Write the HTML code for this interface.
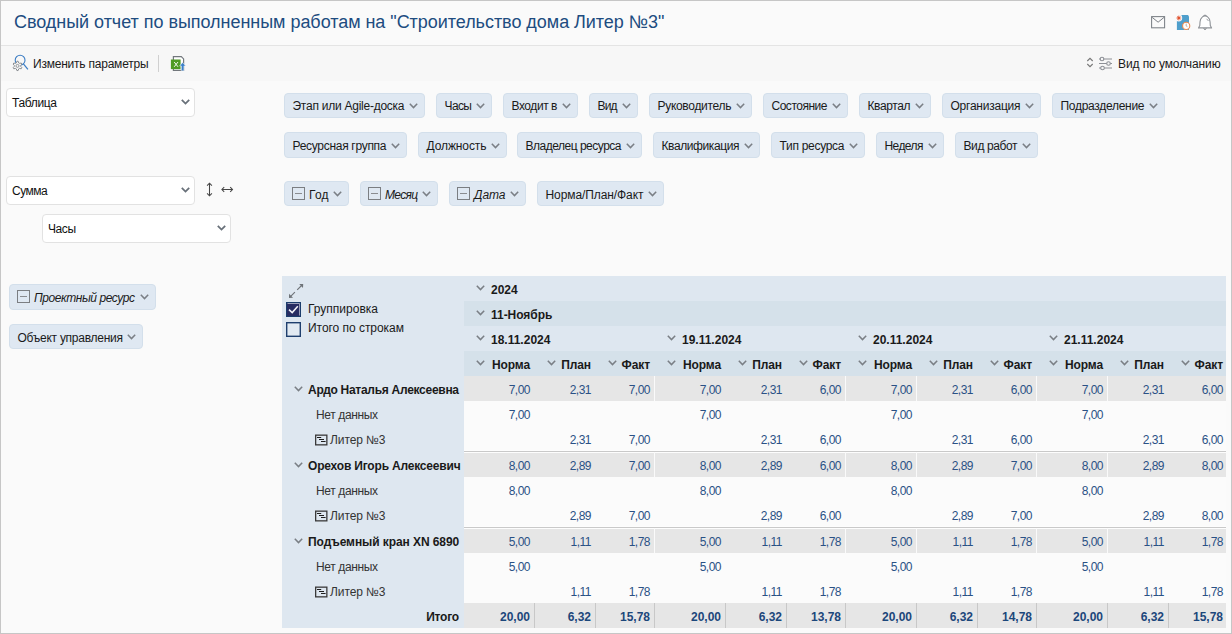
<!DOCTYPE html>
<html><head><meta charset="utf-8"><style>
*{box-sizing:border-box;margin:0;padding:0}
html,body{width:1232px;height:634px;overflow:hidden}
body{background:#fafafa;font-family:"Liberation Sans", sans-serif;font-size:12px;color:#222;position:relative}
.a{position:absolute;white-space:nowrap}
.frame{position:absolute;left:0;top:0;width:1232px;height:634px;border:1px solid #c6c6c6;pointer-events:none;z-index:50}
.chev{position:absolute}
.sel{position:absolute;background:#fff;border:1px solid #e2e2e2;border-radius:4px}
.sel span{position:absolute;left:5px;top:7px;font-size:12px;color:#111;letter-spacing:-0.1px}
.chip{position:absolute;background:#dfe8f2;border:1px solid #d3dfeb;border-radius:4px;height:25px}
.chip span{position:absolute;top:5px;font-size:12px;color:#1a1a1a}
.chip svg.chev{top:9px}
.mini{position:absolute;width:13px;height:13px;border:1px solid #7b7e82;top:5px}
.mini:after{content:"";position:absolute;left:2px;right:2px;top:5px;height:1px;background:#8a8c90}
.tb{position:absolute}
.num{position:absolute;text-align:right;font-size:12px;color:#2a5185;letter-spacing:-0.5px}
.hdr{position:absolute;font-weight:bold;font-size:12px;color:#1a1a1a;letter-spacing:-0.2px}
</style></head>
<body>
<div class="frame"></div><div class="a" style="left:1px;top:45px;width:1230px;height:1px;background:#e4e4e4"></div><div class="a" style="left:1px;top:46px;width:1230px;height:35px;background:#f7f7f7"></div><div class="a" style="left:14px;top:12px;font-size:18px;color:#204c80;letter-spacing:-0.04px">Сводный отчет по выполненным работам на "Строительство дома Литер №3"</div><svg class="a" style="left:1148px;top:13px" width="20" height="18" viewBox="0 0 20 18"><rect x="3.6" y="3.6" width="13" height="11.2" fill="none" stroke="#7b8086" stroke-width="1.05"/><path d="M4.2 4.4 L10.1 9.2 L16 4.4" fill="none" stroke="#7b8086" stroke-width="1"/></svg><svg class="a" style="left:1172px;top:10px" width="24" height="24" viewBox="0 0 24 24"><path d="M4.9 9 V19.9 H17 V6.5 L16 5.1 H9.5 Z" fill="#4f9fcc"/><circle cx="6.8" cy="8" r="3.4" fill="#fafafa"/><path d="M6.8 5.6 V10.4 M4.4 8 H9.2 M5.1 6.3 L8.5 9.7 M8.5 6.3 L5.1 9.7" stroke="#e8765a" stroke-width="1"/><circle cx="6.8" cy="8" r="1.2" fill="#e0502d"/><circle cx="14.2" cy="15.9" r="3.6" fill="#fff" stroke="#eb8a4e" stroke-width="1.1"/><path d="M14.2 13.6 V16 L15.4 16.6" fill="none" stroke="#a9a9a9" stroke-width="0.9"/></svg><svg class="a" style="left:1194px;top:10px" width="24" height="24" viewBox="0 0 24 24"><path d="M11 5.9 C9.6 5.9 9 6.4 8.2 7.1 C6.6 8.4 6.1 10 6 12 L5.8 15.6 L4.5 17.9 H17.6 L16.3 15.6 L16.1 12 C16 10 15.5 8.4 13.9 7.1 C13.1 6.4 12.4 5.9 11 5.9 Z" fill="#fff" stroke="#8f9398" stroke-width="1.1" stroke-linejoin="round"/><path d="M9.4 18.4 Q11 21.2 12.6 18.4" fill="#8f9398" stroke="#8f9398" stroke-width="0.8"/><path d="M9.6 5.8 Q11 4.2 12.4 5.8" fill="#8f9398" stroke="#8f9398" stroke-width="1"/><path d="M12.6 8.8 L14.5 11" stroke="#8f9398" stroke-width="0.9"/></svg><svg class="a" style="left:8px;top:50px" width="24" height="24" viewBox="0 0 24 24"><circle cx="12.1" cy="10.2" r="4.9" fill="none" stroke="#3c7dc4" stroke-width="1.1"/><path d="M15.4 13.8 L19.9 19.4" stroke="#3c7dc4" stroke-width="1.2"/><path d="M8.89 11.24 L10.11 11.24 L10.72 12.94 L11.45 13.36 L13.23 13.04 L13.84 14.10 L12.67 15.48 L12.67 16.32 L13.84 17.70 L13.23 18.76 L11.45 18.44 L10.72 18.86 L10.11 20.56 L8.89 20.56 L8.28 18.86 L7.55 18.44 L5.77 18.76 L5.16 17.70 L6.33 16.32 L6.33 15.48 L5.16 14.10 L5.77 13.04 L7.55 13.36 L8.28 12.94 Z" fill="#f7f7f7" stroke="#8a8d91" stroke-width="1" stroke-linejoin="round"/><circle cx="9.5" cy="15.9" r="1.5" fill="none" stroke="#8a8d91" stroke-width="0.9"/></svg><div class="a" style="left:33px;top:57px;font-size:12px;color:#1a1a1a;letter-spacing:-0.22px">Изменить параметры</div><div class="a" style="left:158px;top:55px;width:1px;height:17px;background:#d0d0d0"></div><svg class="a" style="left:166px;top:50px" width="24" height="24" viewBox="0 0 24 24"><path d="M7.4 20.3 V6.6 H15.3 L17.6 8.9 V20.3 Z" fill="#fff" stroke="#72777c" stroke-width="1.2"/><rect x="4.9" y="9.5" width="9.7" height="9.6" fill="#4f9a24"/><path d="M8.2 12 L12 16.8 M12 12 L8.2 16.8" stroke="#f4f8f0" stroke-width="1"/><path d="M13.6 15.9 L16.6 12.6 L19.8 15.9 H17.9 V20.8 H15.3 V15.9 Z" fill="#3b80c9" stroke="#fff" stroke-width="0.5"/></svg><svg class="a" style="left:1086px;top:57px" width="8" height="11" viewBox="0 0 8 11"><path d="M1.3 4 L4 1.3 L6.7 4 M1.3 7 L4 9.7 L6.7 7" fill="none" stroke="#777" stroke-width="1.1"/></svg><svg class="a" style="left:1098px;top:56px" width="15" height="15" viewBox="0 0 15 15"><path d="M1 3 H14 M1 7.5 H14 M1 12 H14" stroke="#8d9096" stroke-width="1.1"/><circle cx="4" cy="3" r="1.8" fill="#f6f6f6" stroke="#8d9096" stroke-width="1.1"/><circle cx="10.5" cy="7.5" r="1.8" fill="#f6f6f6" stroke="#8d9096" stroke-width="1.1"/><circle cx="4.5" cy="12" r="1.8" fill="#f6f6f6" stroke="#8d9096" stroke-width="1.1"/></svg><div class="a" style="left:1118px;top:57px;font-size:12px;color:#1a1a1a;letter-spacing:-0.09px">Вид по умолчанию</div><div class="sel" style="left:6px;top:88px;width:189px;height:29px"><span style="letter-spacing:-0.34px">Таблица</span><svg class="chev" style="left:174px;top:10px" width="9" height="7" viewBox="0 0 9 7"><path d="M0.8 0.8 L4.5 4.6 L8.2 0.8" fill="none" stroke="#687079" stroke-width="1.75"/></svg></div><div class="sel" style="left:6px;top:176px;width:189px;height:29px"><span style="letter-spacing:-0.5px">Сумма</span><svg class="chev" style="left:174px;top:10px" width="9" height="7" viewBox="0 0 9 7"><path d="M0.8 0.8 L4.5 4.6 L8.2 0.8" fill="none" stroke="#687079" stroke-width="1.75"/></svg></div><div class="sel" style="left:42px;top:214px;width:189px;height:29px"><span style="letter-spacing:-0.43px">Часы</span><svg class="chev" style="left:174px;top:10px" width="9" height="7" viewBox="0 0 9 7"><path d="M0.8 0.8 L4.5 4.6 L8.2 0.8" fill="none" stroke="#687079" stroke-width="1.75"/></svg></div><svg class="a" style="left:205px;top:182px" width="8" height="15" viewBox="0 0 8 15"><path d="M4.5 1.2 V13.8 M2.1 3.6 L4.5 1.2 L6.9 3.6 M2.1 11.4 L4.5 13.8 L6.9 11.4" fill="none" stroke="#454545" stroke-width="1.05"/></svg><svg class="a" style="left:221px;top:185px" width="13" height="9" viewBox="0 0 13 9"><path d="M0.9 4.5 H11.5 M3.2 2.2 L0.9 4.5 L3.2 6.8 M9.2 2.2 L11.5 4.5 L9.2 6.8" fill="none" stroke="#454545" stroke-width="1.05"/></svg><div class="chip" style="left:284px;top:93px;width:141px;height:25px"><span style="left:7.5px;top:5px;letter-spacing:-0.252px">Этап или Agile-доска</span><svg class="chev" style="left:123.5px;top:9px" width="9" height="7" viewBox="0 0 9 7"><path d="M0.8 0.8 L4.5 4.6 L8.2 0.8" fill="none" stroke="#7a7f85" stroke-width="1.5"/></svg></div><div class="chip" style="left:436px;top:93px;width:56px;height:25px"><span style="left:7.5px;top:5px;letter-spacing:-0.599px">Часы</span><svg class="chev" style="left:38.5px;top:9px" width="9" height="7" viewBox="0 0 9 7"><path d="M0.8 0.8 L4.5 4.6 L8.2 0.8" fill="none" stroke="#7a7f85" stroke-width="1.5"/></svg></div><div class="chip" style="left:503px;top:93px;width:75px;height:25px"><span style="left:7.5px;top:5px;letter-spacing:-0.438px">Входит в</span><svg class="chev" style="left:57.5px;top:9px" width="9" height="7" viewBox="0 0 9 7"><path d="M0.8 0.8 L4.5 4.6 L8.2 0.8" fill="none" stroke="#7a7f85" stroke-width="1.5"/></svg></div><div class="chip" style="left:589px;top:93px;width:49px;height:25px"><span style="left:7.5px;top:5px;letter-spacing:-0.8px">Вид</span><svg class="chev" style="left:31.5px;top:9px" width="9" height="7" viewBox="0 0 9 7"><path d="M0.8 0.8 L4.5 4.6 L8.2 0.8" fill="none" stroke="#7a7f85" stroke-width="1.5"/></svg></div><div class="chip" style="left:649px;top:93px;width:103px;height:25px"><span style="left:7.5px;top:5px;letter-spacing:-0.301px">Руководитель</span><svg class="chev" style="left:85.5px;top:9px" width="9" height="7" viewBox="0 0 9 7"><path d="M0.8 0.8 L4.5 4.6 L8.2 0.8" fill="none" stroke="#7a7f85" stroke-width="1.5"/></svg></div><div class="chip" style="left:763px;top:93px;width:85px;height:25px"><span style="left:7.5px;top:5px;letter-spacing:-0.486px">Состояние</span><svg class="chev" style="left:67.5px;top:9px" width="9" height="7" viewBox="0 0 9 7"><path d="M0.8 0.8 L4.5 4.6 L8.2 0.8" fill="none" stroke="#7a7f85" stroke-width="1.5"/></svg></div><div class="chip" style="left:859px;top:93px;width:72px;height:25px"><span style="left:7.5px;top:5px;letter-spacing:-0.393px">Квартал</span><svg class="chev" style="left:54.5px;top:9px" width="9" height="7" viewBox="0 0 9 7"><path d="M0.8 0.8 L4.5 4.6 L8.2 0.8" fill="none" stroke="#7a7f85" stroke-width="1.5"/></svg></div><div class="chip" style="left:942px;top:93px;width:99px;height:25px"><span style="left:7.5px;top:5px;letter-spacing:-0.237px">Организация</span><svg class="chev" style="left:81.5px;top:9px" width="9" height="7" viewBox="0 0 9 7"><path d="M0.8 0.8 L4.5 4.6 L8.2 0.8" fill="none" stroke="#7a7f85" stroke-width="1.5"/></svg></div><div class="chip" style="left:1052px;top:93px;width:113px;height:25px"><span style="left:7.5px;top:5px;letter-spacing:-0.288px">Подразделение</span><svg class="chev" style="left:95.5px;top:9px" width="9" height="7" viewBox="0 0 9 7"><path d="M0.8 0.8 L4.5 4.6 L8.2 0.8" fill="none" stroke="#7a7f85" stroke-width="1.5"/></svg></div><div class="chip" style="left:284px;top:132px;width:123px;height:26px"><span style="left:7.5px;top:6px;letter-spacing:-0.295px">Ресурсная группа</span><svg class="chev" style="left:105.5px;top:10px" width="9" height="7" viewBox="0 0 9 7"><path d="M0.8 0.8 L4.5 4.6 L8.2 0.8" fill="none" stroke="#7a7f85" stroke-width="1.5"/></svg></div><div class="chip" style="left:418px;top:132px;width:89px;height:26px"><span style="left:7.5px;top:6px;letter-spacing:-0.094px">Должность</span><svg class="chev" style="left:71.5px;top:10px" width="9" height="7" viewBox="0 0 9 7"><path d="M0.8 0.8 L4.5 4.6 L8.2 0.8" fill="none" stroke="#7a7f85" stroke-width="1.5"/></svg></div><div class="chip" style="left:517px;top:132px;width:125px;height:26px"><span style="left:7.5px;top:6px;letter-spacing:-0.494px">Владелец ресурса</span><svg class="chev" style="left:107.5px;top:10px" width="9" height="7" viewBox="0 0 9 7"><path d="M0.8 0.8 L4.5 4.6 L8.2 0.8" fill="none" stroke="#7a7f85" stroke-width="1.5"/></svg></div><div class="chip" style="left:653px;top:132px;width:107px;height:26px"><span style="left:7.5px;top:6px;letter-spacing:-0.405px">Квалификация</span><svg class="chev" style="left:89.5px;top:10px" width="9" height="7" viewBox="0 0 9 7"><path d="M0.8 0.8 L4.5 4.6 L8.2 0.8" fill="none" stroke="#7a7f85" stroke-width="1.5"/></svg></div><div class="chip" style="left:771px;top:132px;width:94px;height:26px"><span style="left:7.5px;top:6px;letter-spacing:-0.291px">Тип ресурса</span><svg class="chev" style="left:76.5px;top:10px" width="9" height="7" viewBox="0 0 9 7"><path d="M0.8 0.8 L4.5 4.6 L8.2 0.8" fill="none" stroke="#7a7f85" stroke-width="1.5"/></svg></div><div class="chip" style="left:876px;top:132px;width:68px;height:26px"><span style="left:7.5px;top:6px;letter-spacing:-0.572px">Неделя</span><svg class="chev" style="left:50.5px;top:10px" width="9" height="7" viewBox="0 0 9 7"><path d="M0.8 0.8 L4.5 4.6 L8.2 0.8" fill="none" stroke="#7a7f85" stroke-width="1.5"/></svg></div><div class="chip" style="left:955px;top:132px;width:83px;height:26px"><span style="left:7.5px;top:6px;letter-spacing:-0.396px">Вид работ</span><svg class="chev" style="left:65.5px;top:10px" width="9" height="7" viewBox="0 0 9 7"><path d="M0.8 0.8 L4.5 4.6 L8.2 0.8" fill="none" stroke="#7a7f85" stroke-width="1.5"/></svg></div><div class="chip" style="left:284px;top:181px;width:65px;height:25px"><div class="mini" style="left:7px"></div><span style="left:24px;top:6px;letter-spacing:0.195px">Год</span><svg class="chev" style="left:47.5px;top:9px" width="9" height="7" viewBox="0 0 9 7"><path d="M0.8 0.8 L4.5 4.6 L8.2 0.8" fill="none" stroke="#7a7f85" stroke-width="1.5"/></svg></div><div class="chip" style="left:360px;top:181px;width:78px;height:25px"><div class="mini" style="left:7px"></div><span style="left:24px;top:6px;font-style:italic;letter-spacing:-0.703px">Месяц</span><svg class="chev" style="left:60.5px;top:9px" width="9" height="7" viewBox="0 0 9 7"><path d="M0.8 0.8 L4.5 4.6 L8.2 0.8" fill="none" stroke="#7a7f85" stroke-width="1.5"/></svg></div><div class="chip" style="left:449px;top:181px;width:77px;height:25px"><div class="mini" style="left:7px"></div><span style="left:24px;top:6px;font-style:italic;letter-spacing:-0.057px">Дата</span><svg class="chev" style="left:59.5px;top:9px" width="9" height="7" viewBox="0 0 9 7"><path d="M0.8 0.8 L4.5 4.6 L8.2 0.8" fill="none" stroke="#7a7f85" stroke-width="1.5"/></svg></div><div class="chip" style="left:537px;top:181px;width:127px;height:25px"><span style="left:7.5px;top:6px;letter-spacing:-0.087px">Норма/План/Факт</span><svg class="chev" style="left:109.5px;top:9px" width="9" height="7" viewBox="0 0 9 7"><path d="M0.8 0.8 L4.5 4.6 L8.2 0.8" fill="none" stroke="#7a7f85" stroke-width="1.5"/></svg></div><div class="chip" style="left:9px;top:284px;width:147px;height:26px"><div class="mini" style="left:7px"></div><span style="left:24px;top:6px;font-style:italic;letter-spacing:-0.448px">Проектный ресурс</span><svg class="chev" style="left:129.5px;top:9px" width="9" height="7" viewBox="0 0 9 7"><path d="M0.8 0.8 L4.5 4.6 L8.2 0.8" fill="none" stroke="#7a7f85" stroke-width="1.5"/></svg></div><div class="chip" style="left:9px;top:324px;width:134px;height:25px"><span style="left:7.5px;top:6px;letter-spacing:-0.26px">Объект управления</span><svg class="chev" style="left:116.5px;top:9px" width="9" height="7" viewBox="0 0 9 7"><path d="M0.8 0.8 L4.5 4.6 L8.2 0.8" fill="none" stroke="#7a7f85" stroke-width="1.5"/></svg></div>
<div class="a" style="left:282px;top:276px;width:944px;height:352px;background:#dee7f0"></div><div class="a" style="left:464px;top:301px;width:762px;height:25px;background:#d5e1ea"></div><div class="a" style="left:464px;top:351px;width:762px;height:25px;background:#d5e1ea"></div><svg class="a" style="left:282px;top:278px" width="30" height="22" viewBox="0 0 30 22"><path d="M17.2 6 L21.2 5.9 L21 9.9 Z M7 15.8 L7 20 L11 19.8 Z" fill="#6f7479"/><path d="M15.2 11.9 L19.6 7.5 M8.2 18.8 L12.9 14.1" stroke="#6f7479" stroke-width="1.15"/></svg><svg class="a" style="left:286px;top:302px" width="15" height="15" viewBox="0 0 15 15"><rect x="0.5" y="0.5" width="14" height="14" fill="#272c62" stroke="#1b3d6c"/><path d="M1.5 1.5 H13.5 V13.5" fill="none" stroke="#e8ecf4" stroke-width="0.6"/><path d="M3 7.6 L6.2 10.6 L11.8 4.2" fill="none" stroke="#f4f4f8" stroke-width="1.5"/></svg><svg class="a" style="left:286px;top:322px" width="15" height="15" viewBox="0 0 15 15"><rect x="0.7" y="0.7" width="13.6" height="13.6" fill="#e2eaf2" stroke="#1f3f6e" stroke-width="1.4"/></svg><div class="a" style="left:308px;top:302px;font-size:12px;color:#1a1a1a;letter-spacing:0px">Группировка</div><div class="a" style="left:308px;top:321px;font-size:12px;color:#1a1a1a;letter-spacing:-0.04px">Итого по строкам</div><svg class="chev" style="left:476px;top:285px" width="9" height="7" viewBox="0 0 9 7"><path d="M0.8 0.8 L4.5 4.6 L8.2 0.8" fill="none" stroke="#7a7f85" stroke-width="1.5"/></svg><div class="hdr" style="left:491px;top:283px;letter-spacing:0">2024</div><svg class="chev" style="left:476px;top:310px" width="9" height="7" viewBox="0 0 9 7"><path d="M0.8 0.8 L4.5 4.6 L8.2 0.8" fill="none" stroke="#7a7f85" stroke-width="1.5"/></svg><div class="hdr" style="left:491px;top:308px;letter-spacing:-0.03px">11-Ноябрь</div><svg class="chev" style="left:476px;top:335px" width="9" height="7" viewBox="0 0 9 7"><path d="M0.8 0.8 L4.5 4.6 L8.2 0.8" fill="none" stroke="#7a7f85" stroke-width="1.5"/></svg><div class="hdr" style="left:491px;top:333px;letter-spacing:0">18.11.2024</div><svg class="chev" style="left:667px;top:335px" width="9" height="7" viewBox="0 0 9 7"><path d="M0.8 0.8 L4.5 4.6 L8.2 0.8" fill="none" stroke="#7a7f85" stroke-width="1.5"/></svg><div class="hdr" style="left:682px;top:333px;letter-spacing:0">19.11.2024</div><svg class="chev" style="left:858px;top:335px" width="9" height="7" viewBox="0 0 9 7"><path d="M0.8 0.8 L4.5 4.6 L8.2 0.8" fill="none" stroke="#7a7f85" stroke-width="1.5"/></svg><div class="hdr" style="left:873px;top:333px;letter-spacing:0">20.11.2024</div><svg class="chev" style="left:1049px;top:335px" width="9" height="7" viewBox="0 0 9 7"><path d="M0.8 0.8 L4.5 4.6 L8.2 0.8" fill="none" stroke="#7a7f85" stroke-width="1.5"/></svg><div class="hdr" style="left:1064px;top:333px;letter-spacing:0">21.11.2024</div><svg class="chev" style="left:476px;top:360px" width="9" height="7" viewBox="0 0 9 7"><path d="M0.8 0.8 L4.5 4.6 L8.2 0.8" fill="none" stroke="#7a7f85" stroke-width="1.5"/></svg><div class="hdr" style="left:464px;width:66px;text-align:right;top:358px;letter-spacing:-0.1px">Норма</div><svg class="chev" style="left:547px;top:360px" width="9" height="7" viewBox="0 0 9 7"><path d="M0.8 0.8 L4.5 4.6 L8.2 0.8" fill="none" stroke="#7a7f85" stroke-width="1.5"/></svg><div class="hdr" style="left:535px;width:56px;text-align:right;top:358px;letter-spacing:-0.1px">План</div><svg class="chev" style="left:608px;top:360px" width="9" height="7" viewBox="0 0 9 7"><path d="M0.8 0.8 L4.5 4.6 L8.2 0.8" fill="none" stroke="#7a7f85" stroke-width="1.5"/></svg><div class="hdr" style="left:596px;width:54px;text-align:right;top:358px;letter-spacing:-0.1px">Факт</div><svg class="chev" style="left:667px;top:360px" width="9" height="7" viewBox="0 0 9 7"><path d="M0.8 0.8 L4.5 4.6 L8.2 0.8" fill="none" stroke="#7a7f85" stroke-width="1.5"/></svg><div class="hdr" style="left:655px;width:66px;text-align:right;top:358px;letter-spacing:-0.1px">Норма</div><svg class="chev" style="left:738px;top:360px" width="9" height="7" viewBox="0 0 9 7"><path d="M0.8 0.8 L4.5 4.6 L8.2 0.8" fill="none" stroke="#7a7f85" stroke-width="1.5"/></svg><div class="hdr" style="left:726px;width:56px;text-align:right;top:358px;letter-spacing:-0.1px">План</div><svg class="chev" style="left:799px;top:360px" width="9" height="7" viewBox="0 0 9 7"><path d="M0.8 0.8 L4.5 4.6 L8.2 0.8" fill="none" stroke="#7a7f85" stroke-width="1.5"/></svg><div class="hdr" style="left:787px;width:54px;text-align:right;top:358px;letter-spacing:-0.1px">Факт</div><svg class="chev" style="left:858px;top:360px" width="9" height="7" viewBox="0 0 9 7"><path d="M0.8 0.8 L4.5 4.6 L8.2 0.8" fill="none" stroke="#7a7f85" stroke-width="1.5"/></svg><div class="hdr" style="left:846px;width:66px;text-align:right;top:358px;letter-spacing:-0.1px">Норма</div><svg class="chev" style="left:929px;top:360px" width="9" height="7" viewBox="0 0 9 7"><path d="M0.8 0.8 L4.5 4.6 L8.2 0.8" fill="none" stroke="#7a7f85" stroke-width="1.5"/></svg><div class="hdr" style="left:917px;width:56px;text-align:right;top:358px;letter-spacing:-0.1px">План</div><svg class="chev" style="left:990px;top:360px" width="9" height="7" viewBox="0 0 9 7"><path d="M0.8 0.8 L4.5 4.6 L8.2 0.8" fill="none" stroke="#7a7f85" stroke-width="1.5"/></svg><div class="hdr" style="left:978px;width:54px;text-align:right;top:358px;letter-spacing:-0.1px">Факт</div><svg class="chev" style="left:1049px;top:360px" width="9" height="7" viewBox="0 0 9 7"><path d="M0.8 0.8 L4.5 4.6 L8.2 0.8" fill="none" stroke="#7a7f85" stroke-width="1.5"/></svg><div class="hdr" style="left:1037px;width:66px;text-align:right;top:358px;letter-spacing:-0.1px">Норма</div><svg class="chev" style="left:1120px;top:360px" width="9" height="7" viewBox="0 0 9 7"><path d="M0.8 0.8 L4.5 4.6 L8.2 0.8" fill="none" stroke="#7a7f85" stroke-width="1.5"/></svg><div class="hdr" style="left:1108px;width:56px;text-align:right;top:358px;letter-spacing:-0.1px">План</div><svg class="chev" style="left:1181px;top:360px" width="9" height="7" viewBox="0 0 9 7"><path d="M0.8 0.8 L4.5 4.6 L8.2 0.8" fill="none" stroke="#7a7f85" stroke-width="1.5"/></svg><div class="hdr" style="left:1169px;width:54px;text-align:right;top:358px;letter-spacing:-0.1px">Факт</div><div class="a" style="left:464px;top:376px;width:762px;height:25px;background:#e6e6e6"></div><div class="a" style="left:654px;top:376px;width:1px;height:25px;background:#fafafa"></div><div class="a" style="left:845px;top:376px;width:1px;height:25px;background:#fafafa"></div><div class="a" style="left:916px;top:376px;width:1px;height:25px;background:#fafafa"></div><div class="a" style="left:1036px;top:376px;width:1px;height:25px;background:#fafafa"></div><div class="a" style="left:1107px;top:376px;width:1px;height:25px;background:#fafafa"></div><svg class="chev" style="left:294px;top:386px" width="9" height="7" viewBox="0 0 9 7"><path d="M0.8 0.8 L4.5 4.6 L8.2 0.8" fill="none" stroke="#7a7f85" stroke-width="1.5"/></svg><div class="hdr" style="left:308px;top:383px;letter-spacing:-0.28px">Ардо Наталья Алексеевна</div><div class="num" style="left:464px;width:66px;top:383px;">7,00</div><div class="num" style="left:535px;width:56px;top:383px;">2,31</div><div class="num" style="left:596px;width:54px;top:383px;">7,00</div><div class="num" style="left:655px;width:66px;top:383px;">7,00</div><div class="num" style="left:726px;width:56px;top:383px;">2,31</div><div class="num" style="left:787px;width:54px;top:383px;">6,00</div><div class="num" style="left:846px;width:66px;top:383px;">7,00</div><div class="num" style="left:917px;width:56px;top:383px;">2,31</div><div class="num" style="left:978px;width:54px;top:383px;">6,00</div><div class="num" style="left:1037px;width:66px;top:383px;">7,00</div><div class="num" style="left:1108px;width:56px;top:383px;">2,31</div><div class="num" style="left:1169px;width:54px;top:383px;">6,00</div><div class="a" style="left:464px;top:401px;width:762px;height:25px;background:#fbfbfb"></div><div class="a" style="left:316px;top:408px;font-size:12px;color:#333;letter-spacing:-0.37px">Нет данных</div><div class="num" style="left:464px;width:66px;top:408px;">7,00</div><div class="num" style="left:655px;width:66px;top:408px;">7,00</div><div class="num" style="left:846px;width:66px;top:408px;">7,00</div><div class="num" style="left:1037px;width:66px;top:408px;">7,00</div><div class="a" style="left:464px;top:426px;width:762px;height:25px;background:#fbfbfb"></div><svg class="a" style="left:315px;top:434px" width="13" height="12" viewBox="0 0 13 12"><rect x="0.65" y="1.15" width="11.2" height="9.7" fill="none" stroke="#3a3a3a" stroke-width="1.3"/><path d="M2 3.5 H6.2 M4 5.5 H9 M6 7.5 H10.6" stroke="#1e1e1e" stroke-width="1.1"/></svg><div class="a" style="left:330px;top:433px;font-size:12px;color:#333;letter-spacing:-0.1px">Литер №3</div><div class="num" style="left:535px;width:56px;top:433px;">2,31</div><div class="num" style="left:596px;width:54px;top:433px;">7,00</div><div class="num" style="left:726px;width:56px;top:433px;">2,31</div><div class="num" style="left:787px;width:54px;top:433px;">6,00</div><div class="num" style="left:917px;width:56px;top:433px;">2,31</div><div class="num" style="left:978px;width:54px;top:433px;">6,00</div><div class="num" style="left:1108px;width:56px;top:433px;">2,31</div><div class="num" style="left:1169px;width:54px;top:433px;">6,00</div><div class="a" style="left:464px;top:450px;width:762px;height:1px;background:#fdfdfd"></div><div class="a" style="left:464px;top:451px;width:762px;height:1px;background:#c9c9c9"></div><div class="a" style="left:464px;top:452px;width:762px;height:1px;background:#fdfdfd"></div><div class="a" style="left:464px;top:453px;width:762px;height:24px;background:#e6e6e6"></div><div class="a" style="left:654px;top:452px;width:1px;height:25px;background:#fafafa"></div><div class="a" style="left:845px;top:452px;width:1px;height:25px;background:#fafafa"></div><div class="a" style="left:916px;top:452px;width:1px;height:25px;background:#fafafa"></div><div class="a" style="left:1036px;top:452px;width:1px;height:25px;background:#fafafa"></div><div class="a" style="left:1107px;top:452px;width:1px;height:25px;background:#fafafa"></div><svg class="chev" style="left:294px;top:462px" width="9" height="7" viewBox="0 0 9 7"><path d="M0.8 0.8 L4.5 4.6 L8.2 0.8" fill="none" stroke="#7a7f85" stroke-width="1.5"/></svg><div class="hdr" style="left:308px;top:459px;letter-spacing:-0.19px">Орехов Игорь Алексеевич</div><div class="num" style="left:464px;width:66px;top:459px;">8,00</div><div class="num" style="left:535px;width:56px;top:459px;">2,89</div><div class="num" style="left:596px;width:54px;top:459px;">7,00</div><div class="num" style="left:655px;width:66px;top:459px;">8,00</div><div class="num" style="left:726px;width:56px;top:459px;">2,89</div><div class="num" style="left:787px;width:54px;top:459px;">6,00</div><div class="num" style="left:846px;width:66px;top:459px;">8,00</div><div class="num" style="left:917px;width:56px;top:459px;">2,89</div><div class="num" style="left:978px;width:54px;top:459px;">7,00</div><div class="num" style="left:1037px;width:66px;top:459px;">8,00</div><div class="num" style="left:1108px;width:56px;top:459px;">2,89</div><div class="num" style="left:1169px;width:54px;top:459px;">8,00</div><div class="a" style="left:464px;top:477px;width:762px;height:25px;background:#fbfbfb"></div><div class="a" style="left:316px;top:484px;font-size:12px;color:#333;letter-spacing:-0.37px">Нет данных</div><div class="num" style="left:464px;width:66px;top:484px;">8,00</div><div class="num" style="left:655px;width:66px;top:484px;">8,00</div><div class="num" style="left:846px;width:66px;top:484px;">8,00</div><div class="num" style="left:1037px;width:66px;top:484px;">8,00</div><div class="a" style="left:464px;top:502px;width:762px;height:25px;background:#fbfbfb"></div><svg class="a" style="left:315px;top:510px" width="13" height="12" viewBox="0 0 13 12"><rect x="0.65" y="1.15" width="11.2" height="9.7" fill="none" stroke="#3a3a3a" stroke-width="1.3"/><path d="M2 3.5 H6.2 M4 5.5 H9 M6 7.5 H10.6" stroke="#1e1e1e" stroke-width="1.1"/></svg><div class="a" style="left:330px;top:509px;font-size:12px;color:#333;letter-spacing:-0.1px">Литер №3</div><div class="num" style="left:535px;width:56px;top:509px;">2,89</div><div class="num" style="left:596px;width:54px;top:509px;">7,00</div><div class="num" style="left:726px;width:56px;top:509px;">2,89</div><div class="num" style="left:787px;width:54px;top:509px;">6,00</div><div class="num" style="left:917px;width:56px;top:509px;">2,89</div><div class="num" style="left:978px;width:54px;top:509px;">7,00</div><div class="num" style="left:1108px;width:56px;top:509px;">2,89</div><div class="num" style="left:1169px;width:54px;top:509px;">8,00</div><div class="a" style="left:464px;top:526px;width:762px;height:1px;background:#fdfdfd"></div><div class="a" style="left:464px;top:527px;width:762px;height:1px;background:#c9c9c9"></div><div class="a" style="left:464px;top:528px;width:762px;height:1px;background:#fdfdfd"></div><div class="a" style="left:464px;top:529px;width:762px;height:24px;background:#e6e6e6"></div><div class="a" style="left:654px;top:528px;width:1px;height:25px;background:#fafafa"></div><div class="a" style="left:845px;top:528px;width:1px;height:25px;background:#fafafa"></div><div class="a" style="left:916px;top:528px;width:1px;height:25px;background:#fafafa"></div><div class="a" style="left:1036px;top:528px;width:1px;height:25px;background:#fafafa"></div><div class="a" style="left:1107px;top:528px;width:1px;height:25px;background:#fafafa"></div><svg class="chev" style="left:294px;top:538px" width="9" height="7" viewBox="0 0 9 7"><path d="M0.8 0.8 L4.5 4.6 L8.2 0.8" fill="none" stroke="#7a7f85" stroke-width="1.5"/></svg><div class="hdr" style="left:308px;top:535px;letter-spacing:-0.08px">Подъемный кран XN 6890</div><div class="num" style="left:464px;width:66px;top:535px;">5,00</div><div class="num" style="left:535px;width:56px;top:535px;">1,11</div><div class="num" style="left:596px;width:54px;top:535px;">1,78</div><div class="num" style="left:655px;width:66px;top:535px;">5,00</div><div class="num" style="left:726px;width:56px;top:535px;">1,11</div><div class="num" style="left:787px;width:54px;top:535px;">1,78</div><div class="num" style="left:846px;width:66px;top:535px;">5,00</div><div class="num" style="left:917px;width:56px;top:535px;">1,11</div><div class="num" style="left:978px;width:54px;top:535px;">1,78</div><div class="num" style="left:1037px;width:66px;top:535px;">5,00</div><div class="num" style="left:1108px;width:56px;top:535px;">1,11</div><div class="num" style="left:1169px;width:54px;top:535px;">1,78</div><div class="a" style="left:464px;top:553px;width:762px;height:25px;background:#fbfbfb"></div><div class="a" style="left:316px;top:560px;font-size:12px;color:#333;letter-spacing:-0.37px">Нет данных</div><div class="num" style="left:464px;width:66px;top:560px;">5,00</div><div class="num" style="left:655px;width:66px;top:560px;">5,00</div><div class="num" style="left:846px;width:66px;top:560px;">5,00</div><div class="num" style="left:1037px;width:66px;top:560px;">5,00</div><div class="a" style="left:464px;top:578px;width:762px;height:25px;background:#fbfbfb"></div><svg class="a" style="left:315px;top:586px" width="13" height="12" viewBox="0 0 13 12"><rect x="0.65" y="1.15" width="11.2" height="9.7" fill="none" stroke="#3a3a3a" stroke-width="1.3"/><path d="M2 3.5 H6.2 M4 5.5 H9 M6 7.5 H10.6" stroke="#1e1e1e" stroke-width="1.1"/></svg><div class="a" style="left:330px;top:585px;font-size:12px;color:#333;letter-spacing:-0.1px">Литер №3</div><div class="num" style="left:535px;width:56px;top:585px;">1,11</div><div class="num" style="left:596px;width:54px;top:585px;">1,78</div><div class="num" style="left:726px;width:56px;top:585px;">1,11</div><div class="num" style="left:787px;width:54px;top:585px;">1,78</div><div class="num" style="left:917px;width:56px;top:585px;">1,11</div><div class="num" style="left:978px;width:54px;top:585px;">1,78</div><div class="num" style="left:1108px;width:56px;top:585px;">1,11</div><div class="num" style="left:1169px;width:54px;top:585px;">1,78</div><div class="a" style="left:464px;top:603px;width:762px;height:25px;background:#e6e6e6"></div><div class="a" style="left:534px;top:603px;width:1px;height:25px;background:#c8c8c8"></div><div class="a" style="left:595px;top:603px;width:1px;height:25px;background:#c8c8c8"></div><div class="a" style="left:654px;top:603px;width:1px;height:25px;background:#c8c8c8"></div><div class="a" style="left:725px;top:603px;width:1px;height:25px;background:#c8c8c8"></div><div class="a" style="left:786px;top:603px;width:1px;height:25px;background:#c8c8c8"></div><div class="a" style="left:845px;top:603px;width:1px;height:25px;background:#c8c8c8"></div><div class="a" style="left:916px;top:603px;width:1px;height:25px;background:#c8c8c8"></div><div class="a" style="left:977px;top:603px;width:1px;height:25px;background:#c8c8c8"></div><div class="a" style="left:1036px;top:603px;width:1px;height:25px;background:#c8c8c8"></div><div class="a" style="left:1107px;top:603px;width:1px;height:25px;background:#c8c8c8"></div><div class="a" style="left:1168px;top:603px;width:1px;height:25px;background:#c8c8c8"></div><div class="hdr" style="left:282px;width:177px;text-align:right;top:610px;letter-spacing:-0.2px">Итого</div><div class="num" style="left:464px;width:66px;top:610px;font-weight:bold;color:#1c477b;letter-spacing:0;">20,00</div><div class="num" style="left:535px;width:56px;top:610px;font-weight:bold;color:#1c477b;letter-spacing:0;">6,32</div><div class="num" style="left:596px;width:54px;top:610px;font-weight:bold;color:#1c477b;letter-spacing:0;">15,78</div><div class="num" style="left:655px;width:66px;top:610px;font-weight:bold;color:#1c477b;letter-spacing:0;">20,00</div><div class="num" style="left:726px;width:56px;top:610px;font-weight:bold;color:#1c477b;letter-spacing:0;">6,32</div><div class="num" style="left:787px;width:54px;top:610px;font-weight:bold;color:#1c477b;letter-spacing:0;">13,78</div><div class="num" style="left:846px;width:66px;top:610px;font-weight:bold;color:#1c477b;letter-spacing:0;">20,00</div><div class="num" style="left:917px;width:56px;top:610px;font-weight:bold;color:#1c477b;letter-spacing:0;">6,32</div><div class="num" style="left:978px;width:54px;top:610px;font-weight:bold;color:#1c477b;letter-spacing:0;">14,78</div><div class="num" style="left:1037px;width:66px;top:610px;font-weight:bold;color:#1c477b;letter-spacing:0;">20,00</div><div class="num" style="left:1108px;width:56px;top:610px;font-weight:bold;color:#1c477b;letter-spacing:0;">6,32</div><div class="num" style="left:1169px;width:54px;top:610px;font-weight:bold;color:#1c477b;letter-spacing:0;">15,78</div>
</body></html>
